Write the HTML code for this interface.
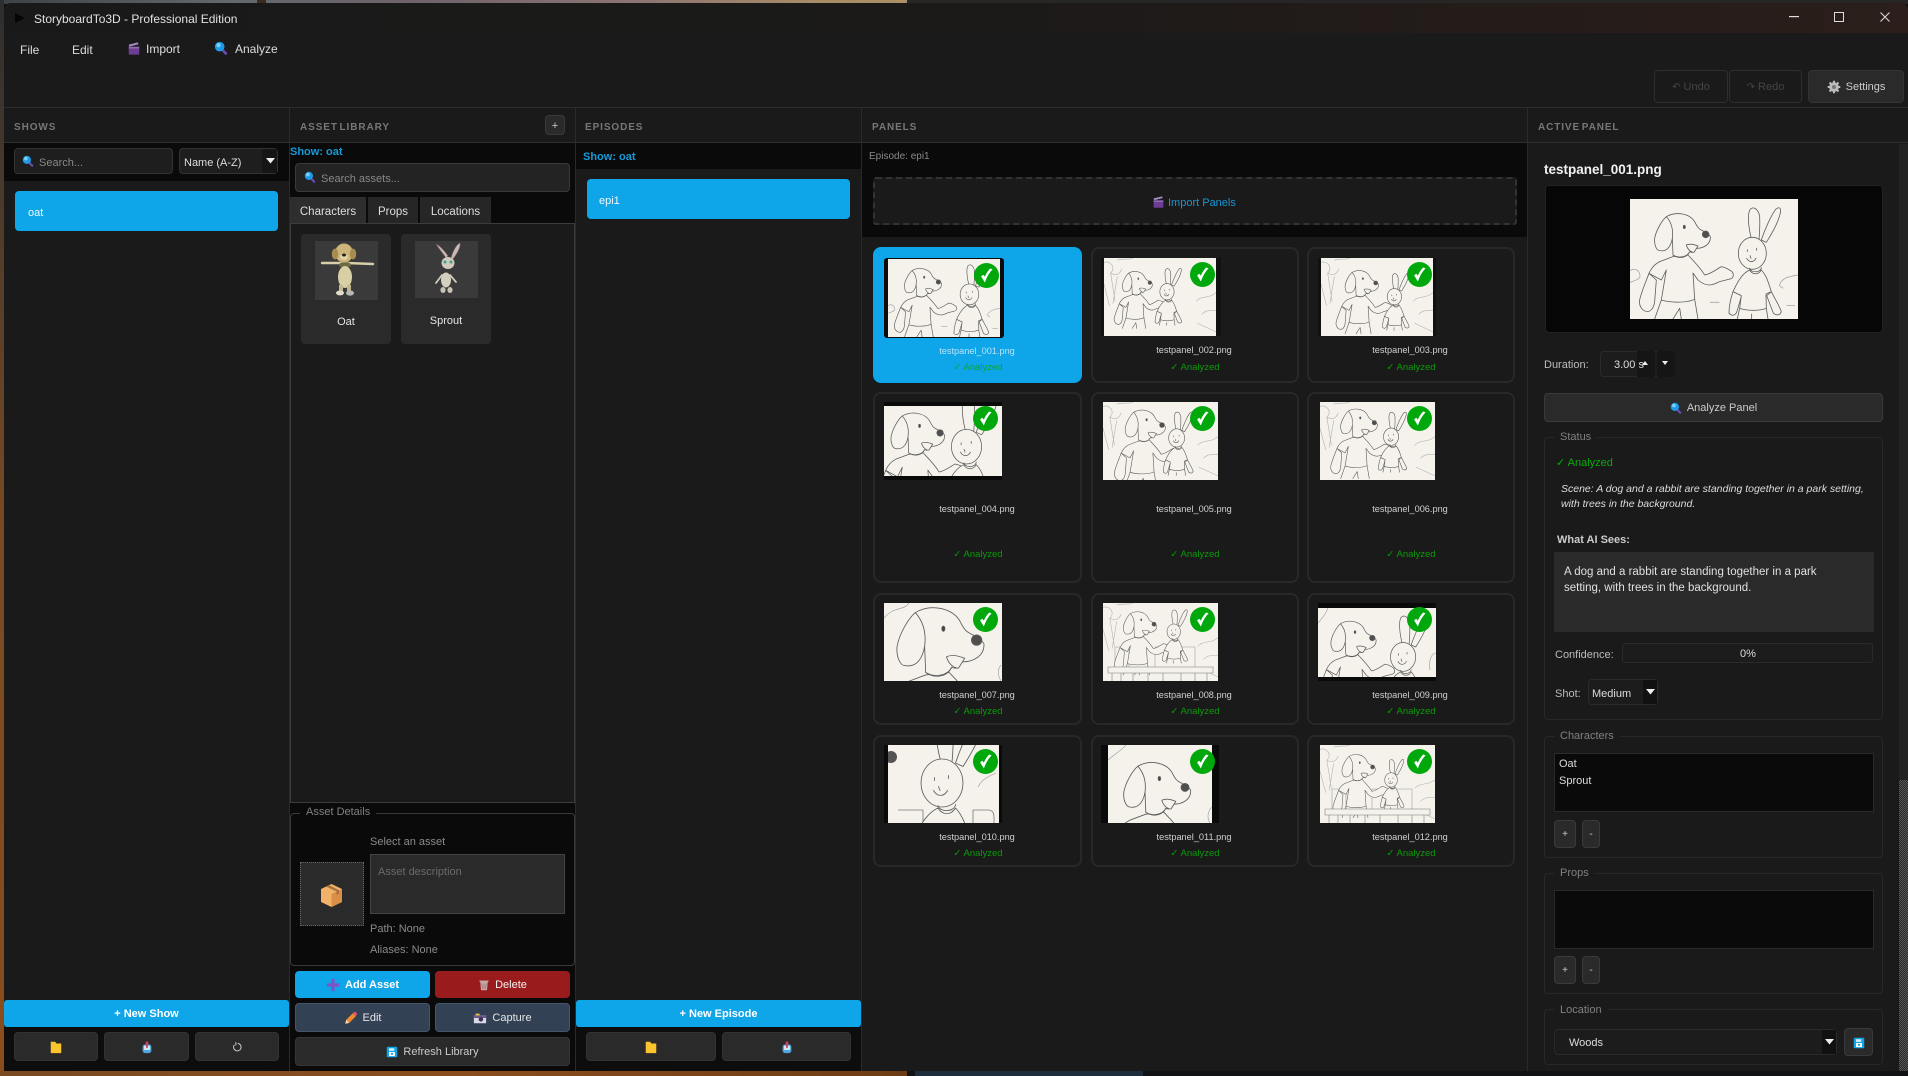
<!DOCTYPE html>
<html><head><meta charset="utf-8"><title>StoryboardTo3D - Professional Edition</title>
<style>
html,body{margin:0;padding:0;width:1908px;height:1076px;overflow:hidden;background:#111;font-family:"Liberation Sans","DejaVu Sans",sans-serif;color:#ccc}
.a{position:absolute;box-sizing:border-box}
.t{position:absolute;white-space:nowrap;line-height:16px;height:16px;font-size:11px;margin-top:1px}
.c{text-align:center}
.hd{font-size:10px;font-weight:bold;color:#777;letter-spacing:.9px;word-spacing:-2px}
.btn{position:absolute;box-sizing:border-box;border:1px solid #3a3a3a;border-radius:4px;background:#2a2a2a;color:#ccc;font-size:11px;display:flex;align-items:center;justify-content:center;white-space:nowrap;padding-top:1px}
.blue{background:#0ea5e9;border:0;color:#fff;font-weight:bold}
.slate{background:#334155;border-color:#475569;color:#e5e5e5}
.ic{width:14px;height:14px;margin-right:4px;flex:none}
.card{position:absolute;box-sizing:border-box;border:2px solid #282828;border-radius:8px;background:#1a1a1a}
.sel{background:#0ea5e9;border-color:#0ea5e9}
.blk{position:absolute;background:#0a0a0a}
.pic{position:absolute;background:#f5f2ec;display:block}
.nm{position:absolute;white-space:nowrap;font-size:9.2px;line-height:14px;color:#d0d0d0;text-align:center;width:120px;margin-top:1px}
.an{position:absolute;white-space:nowrap;font-size:9.5px;line-height:14px;color:#0a9a0a;text-align:center;width:120px;margin-top:1px}
.bdg{position:absolute;width:25px;height:25px;display:block}
.grp{position:absolute;box-sizing:border-box;border:1px solid #282828;border-radius:4px}
.gt{position:absolute;font-size:11px;line-height:14px;color:#808080;background:#1a1a1a;padding:0 6px;white-space:nowrap;margin-top:1px}
.ln *{vector-effect:non-scaling-stroke}
.inp{position:absolute;box-sizing:border-box;background:#1e1e1e;border:1px solid #333;border-radius:4px}
</style></head>
<body>
<svg width="0" height="0" style="position:absolute">
<defs>
<g id="dog" class="ln" fill="#f5f2ec" stroke="#5c5c5c" stroke-linejoin="round" stroke-linecap="round">
<path d="M94 303L74 360M194 301L204 360M149 328L129 360M149 328L154 360"/>
<path d="M57 223C45 255 32 285 29 303C26 322 38 338 54 338C66 335 72 322 74 308L79 243Z"/>
<path d="M174 168C190 185 210 205 224 228C240 226 258 212 274 203C285 205 300 212 308 220C312 230 310 238 300 240L269 248C255 255 245 258 239 258C225 258 212 250 204 243L189 222L194 301C170 312 125 312 94 303L109 213L94 243L57 223C65 205 75 195 89 188L129 173Z"/>
<path d="M129 168C145 180 170 178 179 158" fill="none"/>
<path d="M127 118L129 168C145 178 170 176 179 158C186 162 194 160 199 148C222 148 243 135 241 113C238 106 228 100 214 93C208 90 204 88 194 68C180 45 140 35 109 53C95 65 78 95 74 118C72 138 80 155 89 155C115 160 124 135 127 118Z"/>
<path d="M127 118C130 95 126 72 109 53" fill="none"/>
<path d="M169 138C180 133 192 136 204 141L192 160C182 160 172 150 169 138Z"/>
<circle cx="227" cy="106" r="10" fill="#4f4f4f"/>
<ellipse cx="163" cy="84" rx="3" ry="5" fill="#444"/>
</g>
<g id="rab" class="ln" fill="#f5f2ec" stroke="#5c5c5c" stroke-linejoin="round" stroke-linecap="round">
<path d="M364 118C355 85 352 45 360 32C370 20 385 30 389 52C390 75 389 100 387 122Z"/>
<path d="M394 123C405 90 425 45 439 29C450 22 454 30 451 42C445 70 425 105 409 130Z"/>
<path d="M329 328L322 360M409 328L414 360M365 345L365 360"/>
<path d="M309 278C300 305 297 325 297 343C305 352 315 350 320 340L335 290Z"/>
<path d="M424 278C435 300 448 320 454 338C450 350 438 350 430 342L410 290Z"/>
<path d="M359 213C340 222 326 240 309 278L334 290L329 328C355 336 385 336 409 328L408 285L424 278C415 250 410 230 394 213C385 228 368 228 359 213Z"/>
<ellipse cx="367" cy="163" rx="42" ry="48"/>
<path d="M352 152l0 6M380 148l0 6"/>
<path d="M350 178C358 192 372 190 378 178M360 170l3 8" fill="none"/>
<path d="M359 208C362 222 392 222 394 206" fill="none"/>
</g>
<g id="bg1" class="ln" fill="none" stroke="#a5a5a5">
<path d="M0 215C15 205 30 215 30 232M0 250C15 245 30 240 30 232"/>
<path d="M448 260C455 235 480 232 504 228M448 260L460 268M470 320H495M240 310H268"/>
</g>
<g id="tree" class="ln" fill="none" stroke="#b0b0b0">
<path d="M0 20C30 10 55 45 30 70C50 80 70 80 80 50M60 10C85 0 120 10 130 0"/>
<path d="M30 70L50 200M60 85L40 210M0 120L25 220M415 200C440 170 470 190 504 160M420 300L504 340M440 260C470 230 480 250 504 240"/>
</g>
<g id="bb" class="ln" fill="none" stroke="#999"><path d="M12 64V44H26V64M52 64V44H92V64"/></g>
<g id="bench" class="ln" fill="#f5f2ec" stroke="#777">
<rect x="5" y="64" width="105" height="6"/>
<path d="M9 70V78M18 70V78M30 70V78M45 70V78M60 70V78M78 70V78M92 70V78M104 70V78" fill="none"/>
</g>
<g id="check"><circle cx="12.5" cy="12.5" r="12.5" fill="#00a80c"/><path d="M7.5 13.5L10.8 18.8C12.5 14 15 9.5 18 6.5L16.3 5.8C13.8 8.4 12 11.4 10.9 14.2L9.2 12.2Z" fill="#fff" stroke="#fff" stroke-width=".6"/></g>
<symbol id="mag" viewBox="0 0 16 16"><path d="M9.5 10l4 4.2" stroke="#6b4bb0" stroke-width="3" stroke-linecap="round"/><circle cx="6.5" cy="6.5" r="5.5" fill="#1e9be8"/><circle cx="5.2" cy="4.8" r="2.4" fill="#7fd0f8"/></symbol>
<symbol id="clap" viewBox="0 0 16 16"><rect x="2" y="6" width="12" height="9" rx="1" fill="#6d3d94"/><path d="M2 3.5L12.5 1l.6 2.2L2.5 5.8Z" fill="#a88bc4"/><rect x="2" y="6" width="12" height="2" fill="#8d6ab0"/></symbol>
<symbol id="folder" viewBox="0 0 16 16"><path d="M2 2h5l1.5 2H14v11H2Z" fill="#fbc52d"/></symbol>
<symbol id="upl" viewBox="0 0 16 16"><rect x="3" y="5" width="10" height="10" rx="3" fill="#4aa6dc"/><rect x="4.5" y="6.5" width="7" height="5" fill="#cfe6f4"/><path d="M8 1L5.5 4h5Z M7 4h2v5H7Z" fill="#d8385a"/></symbol>
<symbol id="rfr" viewBox="0 0 16 16"><path d="M9 3.2A5 5 0 1 1 4.6 5" fill="none" stroke="#ccc" stroke-width="1.3"/><path d="M6.5 1.5v4.5" stroke="#ccc" stroke-width="1.3"/></symbol>
<symbol id="save" viewBox="0 0 16 16"><rect x="1" y="1" width="14" height="14" rx="1.5" fill="#0ea5e9"/><rect x="4" y="3" width="7" height="3.5" fill="#d9eefb"/><rect x="4" y="8" width="8" height="5.5" fill="#fff"/><circle cx="8" cy="10.5" r="1.5" fill="#0ea5e9"/></symbol>
<symbol id="pen" viewBox="0 0 16 16"><path d="M1.5 14.5l1-4.5L10 2.5l3.5 3.5L6 13.5Z" fill="#f08a2e"/><path d="M10 2.5l1.6-1.4c.6-.4 1.2-.4 1.7 0l1.3 1.4c.4.5.3 1.1 0 1.5L13.5 6Z" fill="#e2527a"/><path d="M1.5 14.5l1-4.5 3.5 3.5Z" fill="#f6d9b0"/></symbol>
<symbol id="cam" viewBox="0 0 16 16"><rect x="1" y="5" width="14" height="9" fill="#ddd8e8"/><rect x="1" y="5" width="14" height="3" fill="#6a5a8c"/><path d="M3 5V3h4l1 2Z" fill="#f2c84a"/><circle cx="9" cy="9.5" r="2.6" fill="#3b3350"/></symbol>
<symbol id="plus" viewBox="0 0 16 16"><path d="M6.2 1h3.6v5.2H15v3.6H9.8V15H6.2V9.8H1V6.2h5.2Z" fill="#7a55c7"/></symbol>
<symbol id="trash" viewBox="0 0 16 16"><path d="M2 2h12v2H2ZM3 4h10l-1 11H4Z" fill="#c9a6a6"/><path d="M5 6l1 7M8 6v7M11 6l-1 7" stroke="#8d6a6a" stroke-width=".8"/></symbol>
<symbol id="gear" viewBox="0 0 16 16"><circle cx="8" cy="8" r="5.5" fill="#bbb"/><path d="M8 0.8V15.2M0.8 8H15.2M2.9 2.9L13.1 13.1M13.1 2.9L2.9 13.1" stroke="#bbb" stroke-width="2.4"/><circle cx="8" cy="8" r="2.3" fill="#777"/></symbol>
</defs>
</svg>

<!-- wallpaper -->
<div class="a" style="left:0;top:0;width:907px;height:4px;background:linear-gradient(90deg,#3c4246 0,#62696e 25%,#6e626a 45%,#8c7474 70%,#a88c66 90%,#ab9064 100%)"></div>
<div class="a" style="left:257px;top:0;width:9px;height:4px;background:#3a2a20"></div>
<div class="a" style="left:907px;top:0;width:1001px;height:4px;background:#262626"></div>
<div class="a" style="left:0;top:0;width:4px;height:1076px;background:linear-gradient(180deg,#2e2e2e 0,#4a3a2c 18%,#7a4a22 50%,#8a4c1c 100%)"></div>
<div class="a" style="left:0;top:1071px;width:907px;height:5px;background:linear-gradient(90deg,#7a4a22,#8a4e1e 50%,#6e3c14)"></div>
<div class="a" style="left:907px;top:1071px;width:1001px;height:5px;background:#101214"></div>
<div class="a" style="left:915px;top:1071px;width:228px;height:5px;background:#1e2d3c"></div>

<!-- window -->
<div class="a" style="left:4px;top:3px;width:1904px;height:1068px;background:#1a1a1a;border-radius:7px 7px 0 0;overflow:hidden"></div>
<div class="a" style="left:4px;top:3px;width:1904px;height:30px;border-radius:7px 7px 0 0;background:linear-gradient(90deg,#191919 0,#1b1a19 50%,#261c19 85%,#2b1e1b 100%)"></div>
<svg class="a" style="left:15px;top:13px" width="10" height="10"><path d="M0 0L10 5L0 10Z" fill="#050505"/></svg>
<div class="t" style="left:34px;top:10px;font-size:12px;color:#e2e2e2">StoryboardTo3D - Professional Edition</div>
<svg class="a" style="left:1789px;top:16px" width="10" height="2"><rect width="10" height="1.2" fill="#ddd"/></svg>
<svg class="a" style="left:1834px;top:12px" width="10" height="10"><rect x=".5" y=".5" width="9" height="9" fill="none" stroke="#ddd"/></svg>
<svg class="a" style="left:1880px;top:12px" width="10" height="10"><path d="M.5.5l9 9M9.5.5l-9 9" stroke="#ddd"/></svg>

<div class="t" style="left:20px;top:41px;font-size:12px;color:#ddd">File</div>
<div class="t" style="left:72px;top:41px;font-size:12px;color:#ddd">Edit</div>
<svg class="a" style="left:127px;top:41px" width="14" height="15"><use href="#clap"/></svg>
<div class="t" style="left:146px;top:40px;font-size:12px;color:#ddd">Import</div>
<svg class="a" style="left:214px;top:41px" width="14" height="14"><use href="#mag"/></svg>
<div class="t" style="left:235px;top:40px;font-size:12px;color:#ddd">Analyze</div>

<div class="btn" style="left:1654px;top:70px;width:74px;height:33px;background:#1a1a1a;border-color:#2e2e2e;color:#454545;border-radius:4px"><span style="font-size:10px;margin-right:3px">↶</span>Undo</div>
<div class="btn" style="left:1729px;top:70px;width:73px;height:33px;background:#1a1a1a;border-color:#2e2e2e;color:#454545"><span style="font-size:10px;margin-right:3px">↷</span>Redo</div>
<div class="btn" style="left:1808px;top:70px;width:96px;height:33px;border-color:#333;color:#ccc"><svg class="ic" style="margin-right:5px"><use href="#gear"/></svg>Settings</div>

<!-- lines -->
<div class="a" style="left:4px;top:107px;width:1904px;height:1px;background:#2c2c2c"></div>
<div class="a" style="left:4px;top:142px;width:1904px;height:1px;background:#2e2e2e"></div>
<div class="a" style="left:289px;top:108px;width:1px;height:963px;background:#2a2a2a"></div>
<div class="a" style="left:575px;top:108px;width:1px;height:963px;background:#2a2a2a"></div>
<div class="a" style="left:861px;top:108px;width:1px;height:963px;background:#2a2a2a"></div>
<div class="a" style="left:1527px;top:108px;width:1px;height:963px;background:#2a2a2a"></div>

<div class="t hd" style="left:14px;top:119px">SHOWS</div>
<div class="t hd" style="left:300px;top:119px">ASSET LIBRARY</div>
<div class="t hd" style="left:585px;top:119px">EPISODES</div>
<div class="t hd" style="left:872px;top:119px">PANELS</div>
<div class="t hd" style="left:1538px;top:119px">ACTIVE PANEL</div>
<div class="btn" style="left:545px;top:115px;width:20px;height:20px;font-size:11px">+</div>

<!-- SHOWS -->
<div class="a" style="left:4px;top:143px;width:285px;height:38px;background:#0a0a0a"></div>
<div class="a" style="left:4px;top:1027px;width:285px;height:44px;background:#0d0d0d"></div>
<div class="inp" style="left:14px;top:148px;width:159px;height:26px"></div>
<svg class="a" style="left:22px;top:155px" width="12" height="12"><use href="#mag"/></svg>
<div class="t" style="left:39px;top:154px;font-size:11px;color:#888">Search...</div>
<div class="inp" style="left:179px;top:148px;width:99px;height:26px"></div>
<div class="t" style="left:184px;top:154px;font-size:11px;color:#ddd">Name (A-Z)</div>
<div class="a" style="left:262px;top:149px;width:15px;height:24px;background:#151515"></div>
<svg class="a" style="left:266px;top:158px" width="9" height="6"><path d="M0 0h9L4.5 5.5Z" fill="#eee"/></svg>
<div class="a" style="left:15px;top:191px;width:263px;height:40px;background:#0ea5e9;border-radius:4px"></div>
<div class="t" style="left:28px;top:204px;font-size:11px;color:#f0f8ff">oat</div>
<div class="btn blue" style="left:4px;top:1000px;width:285px;height:27px;border-radius:3px">+ New Show</div>
<div class="btn" style="left:14px;top:1032px;width:84px;height:29px;border-color:#333"><svg width="14" height="14"><use href="#folder"/></svg></div>
<div class="btn" style="left:104px;top:1032px;width:85px;height:29px;border-color:#333"><svg width="14" height="14"><use href="#upl"/></svg></div>
<div class="btn" style="left:195px;top:1032px;width:84px;height:29px;border-color:#333"><svg width="12" height="12"><use href="#rfr"/></svg></div>

<!-- ASSET LIBRARY -->
<div class="a" style="left:290px;top:143px;width:285px;height:928px;background:#0a0a0a"></div>
<div class="t" style="left:290px;top:143px;font-size:11px;font-weight:bold;color:#169bd8">Show: oat</div>
<div class="inp" style="left:295px;top:163px;width:275px;height:29px;background:#232323;border-color:#3a3a3a"></div>
<svg class="a" style="left:304px;top:171px" width="12" height="12"><use href="#mag"/></svg>
<div class="t" style="left:321px;top:170px;font-size:11px;color:#888">Search assets...</div>
<div class="a" style="left:290px;top:197px;width:76px;height:26px;background:#2e2e2e"></div>
<div class="a" style="left:368px;top:197px;width:50px;height:26px;background:#262626"></div>
<div class="a" style="left:420px;top:197px;width:71px;height:26px;background:#262626"></div>
<div class="t c" style="left:290px;top:203px;width:76px;font-size:11.5px;color:#ddd">Characters</div>
<div class="t c" style="left:368px;top:203px;width:50px;font-size:11.5px;color:#ddd">Props</div>
<div class="t c" style="left:420px;top:203px;width:71px;font-size:11.5px;color:#ddd">Locations</div>
<div class="a" style="left:290px;top:223px;width:285px;height:580px;background:#1a1a1a;border:1px solid #3c3c3c"></div>
<div class="a" style="left:301px;top:234px;width:90px;height:110px;background:#2a2a2a;border-radius:4px"></div>
<div class="a" style="left:401px;top:234px;width:90px;height:110px;background:#2a2a2a;border-radius:4px"></div>
<svg class="a" style="left:315px;top:241px" width="63" height="59" viewBox="0 0 63 59">
<rect width="63" height="59" fill="#3a3a3a"/>
<path d="M7 22L28 22M32 22L58 23" stroke="#d8cfa8" stroke-width="2.4" stroke-linecap="round"/>
<ellipse cx="30" cy="24" rx="6" ry="3" fill="#6b6b45"/>
<ellipse cx="30" cy="36" rx="7" ry="11" fill="#d9cfa5"/>
<rect x="24" y="44" width="4" height="7" fill="#c4b98e"/><rect x="32" y="44" width="4" height="7" fill="#c4b98e"/>
<ellipse cx="25" cy="52" rx="4" ry="2.4" fill="#e0dcc8"/><ellipse cx="35" cy="52" rx="4" ry="2.6" fill="#b8b8b0"/>
<ellipse cx="29" cy="12" rx="9" ry="9.5" fill="#cdb478"/>
<ellipse cx="20" cy="13" rx="3.2" ry="5.5" fill="#a68c52"/><ellipse cx="38" cy="13" rx="3.2" ry="5.5" fill="#a68c52"/>
<ellipse cx="29" cy="16" rx="4" ry="3" fill="#e2d4a8"/><ellipse cx="29" cy="14" rx="2" ry="1.5" fill="#222"/>
</svg>
<svg class="a" style="left:415px;top:241px" width="63" height="57" viewBox="0 0 63 57">
<rect width="63" height="57" fill="#3a3a3a"/>
<path d="M31 17C26 10 22 5 21 3C24 4 30 10 33 15Z" fill="#c9b8b8" stroke="#6d5a5a" stroke-width=".6"/>
<path d="M36 17C38 9 42 3 45 2C46 6 42 13 38 18Z" fill="#c9b8b8" stroke="#6d5a5a" stroke-width=".6"/>
<ellipse cx="33" cy="22" rx="6.5" ry="6" fill="#cfcabb"/>
<circle cx="30" cy="21" r="1.5" fill="#3aa58f"/><circle cx="36" cy="21" r="1.5" fill="#3aa58f"/>
<ellipse cx="31" cy="39" rx="5" ry="7.5" fill="#d4cfbe"/>
<path d="M27 34L21 42M35 34L41 41" stroke="#cfcabb" stroke-width="1.8" stroke-linecap="round"/>
<ellipse cx="28" cy="49" rx="2.6" ry="3" fill="#c8c3b2"/><ellipse cx="35" cy="49" rx="2.6" ry="3" fill="#c8c3b2"/>
</svg>
<div class="t c" style="left:301px;top:313px;width:90px;font-size:11px;color:#e5e5e5">Oat</div>
<div class="t c" style="left:401px;top:312px;width:90px;font-size:11px;color:#e5e5e5">Sprout</div>

<div class="grp" style="left:290px;top:813px;width:285px;height:153px;border-color:#3a3a3a"></div>
<div class="gt" style="left:300px;top:804px;background:#0a0a0a;color:#808080">Asset Details</div>
<div class="t" style="left:370px;top:833px;font-size:11px;color:#8a8a8a">Select an asset</div>
<div class="a" style="left:370px;top:854px;width:195px;height:60px;background:#2a2a2a;border:1px solid #444"></div>
<div class="t" style="left:378px;top:863px;font-size:11px;color:#6a6a6a">Asset description</div>
<div class="a" style="left:300px;top:862px;width:64px;height:64px;background:#2a2a2a;border:1px dotted #666"></div>
<svg class="a" style="left:321px;top:884px" width="21" height="23" viewBox="0 0 21 23"><path d="M10.5 0L21 5V18L10.5 23L0 18V5Z" fill="#f1b267"/><path d="M10.5 10L21 5V18L10.5 23Z" fill="#d98f46"/><path d="M5 2.5L15.5 7.5V11L18 9.8V6.3L8 1Z" fill="#a9713e"/></svg>
<div class="t" style="left:370px;top:920px;font-size:11px;color:#8a8a8a">Path: None</div>
<div class="t" style="left:370px;top:941px;font-size:11px;color:#8a8a8a">Aliases: None</div>
<div class="btn blue" style="left:295px;top:971px;width:135px;height:27px"><svg class="ic" style="margin-right:5px"><use href="#plus"/></svg>Add Asset</div>
<div class="btn" style="left:435px;top:971px;width:135px;height:27px;background:#991b1b;border:0;color:#f2f2f2"><svg class="ic" style="width:12px;height:12px;margin-right:5px"><use href="#trash"/></svg>Delete</div>
<div class="btn slate" style="left:295px;top:1003px;width:135px;height:29px"><svg class="ic" style="margin-right:5px"><use href="#pen"/></svg>Edit</div>
<div class="btn slate" style="left:435px;top:1003px;width:135px;height:29px"><svg class="ic" style="margin-right:5px"><use href="#cam"/></svg>Capture</div>
<div class="btn" style="left:295px;top:1037px;width:275px;height:29px;border-color:#363636"><svg class="ic" style="width:12px;height:12px;margin-right:5px"><use href="#save"/></svg>Refresh Library</div>

<!-- EPISODES -->
<div class="a" style="left:576px;top:143px;width:285px;height:26px;background:#0a0a0a"></div>
<div class="a" style="left:576px;top:1027px;width:285px;height:44px;background:#0d0d0d"></div>
<div class="t" style="left:583px;top:148px;font-size:11px;font-weight:bold;color:#169bd8">Show: oat</div>
<div class="a" style="left:587px;top:179px;width:263px;height:40px;background:#0ea5e9;border-radius:4px"></div>
<div class="t" style="left:599px;top:192px;font-size:11px;color:#f0f8ff">epi1</div>
<div class="btn blue" style="left:576px;top:1000px;width:285px;height:27px;border-radius:3px">+ New Episode</div>
<div class="btn" style="left:586px;top:1032px;width:130px;height:29px;border-color:#333"><svg width="14" height="14"><use href="#folder"/></svg></div>
<div class="btn" style="left:722px;top:1032px;width:129px;height:29px;border-color:#333"><svg width="14" height="14"><use href="#upl"/></svg></div>

<!-- PANELS -->
<div class="a" style="left:862px;top:143px;width:665px;height:94px;background:#0a0a0a"></div>
<div class="t" style="left:869px;top:148px;font-size:10px;color:#8a8a8a">Episode: epi1</div>
<div class="a" style="left:873px;top:177px;width:644px;height:48px;background:#1a1a1a;border:2px dashed #333;border-radius:3px"></div>
<svg class="a" style="left:1152px;top:195px" width="13" height="14"><use href="#clap"/></svg>
<div class="t" style="left:1168px;top:194px;font-size:11px;color:#1e95cf">Import Panels</div>

<!-- cards -->
<div class="card sel" style="left:873px;top:247px;width:209px;height:136px"></div>
<div class="card" style="left:1091px;top:247px;width:208px;height:136px"></div>
<div class="card" style="left:1307px;top:247px;width:208px;height:136px"></div>
<div class="card" style="left:873px;top:392px;width:209px;height:191px"></div>
<div class="card" style="left:1091px;top:392px;width:208px;height:191px"></div>
<div class="card" style="left:1307px;top:392px;width:208px;height:191px"></div>
<div class="card" style="left:873px;top:593px;width:209px;height:132px"></div>
<div class="card" style="left:1091px;top:593px;width:208px;height:132px"></div>
<div class="card" style="left:1307px;top:593px;width:208px;height:132px"></div>
<div class="card" style="left:873px;top:735px;width:209px;height:132px"></div>
<div class="card" style="left:1091px;top:735px;width:208px;height:132px"></div>
<div class="card" style="left:1307px;top:735px;width:208px;height:132px"></div>

<!-- thumbnails row 1 -->
<div class="blk" style="left:884px;top:258px;width:120px;height:80px;border-radius:3px"></div>
<svg class="pic" style="left:888px;top:259px" width="112" height="78" viewBox="0 0 112 78" stroke-width=".65"><g transform="scale(.222 .217)"><use href="#bg1"/><use href="#dog"/><use href="#rab"/></g></svg>
<div class="blk" style="left:1101px;top:258px;width:120px;height:78px;background:#111"></div>
<svg class="pic" style="left:1104px;top:258px" width="112" height="78" viewBox="0 0 112 78" stroke-width=".6"><g transform="scale(.222 .217)"><use href="#tree"/></g><use href="#dog" transform="translate(5 5.6) scale(.18)"/><use href="#rab" transform="translate(.6 6) scale(.17)"/></svg>
<div class="blk" style="left:1318px;top:258px;width:118px;height:78px;background:#111"></div>
<svg class="pic" style="left:1321px;top:258px" width="112" height="78" viewBox="0 0 112 78" stroke-width=".6"><g transform="scale(.222 .217)"><use href="#tree"/></g><use href="#dog" transform="translate(9.3 3.8) scale(.2)"/><use href="#rab" transform="translate(11 11) scale(.17)"/></svg>
<!-- row 2 -->
<div class="blk" style="left:884px;top:402px;width:118px;height:78px"></div>
<svg class="pic" style="left:884px;top:406px" width="118" height="70" viewBox="0 0 118 70" stroke-width=".75"><use href="#dog" transform="translate(-16.6 -7) scale(.32)"/><use href="#rab" transform="translate(-49.6 -18) scale(.36)"/></svg>
<svg class="pic" style="left:1103px;top:402px" width="115" height="78" viewBox="0 0 115 78" stroke-width=".6"><g transform="scale(.228 .217)"><use href="#tree"/></g><use href="#dog" transform="translate(4.5 -2.4) scale(.24)"/><use href="#rab" transform="translate(3.9 5) scale(.19)"/></svg>
<svg class="pic" style="left:1320px;top:402px" width="115" height="78" viewBox="0 0 115 78" stroke-width=".6"><g transform="scale(.228 .217)"><use href="#tree"/></g><use href="#dog" transform="translate(4.4 -2.6) scale(.22)"/><use href="#rab" transform="translate(5 5.4) scale(.18)"/></svg>
<!-- row 3 -->
<svg class="pic" style="left:884px;top:603px" width="118" height="78" viewBox="0 0 118 78" stroke-width=".85"><path d="M0 15C10 3 20 8 25 0M117 62C112 68 115 75 117 78" fill="none" stroke="#999" stroke-width=".6"/><use href="#dog" transform="translate(-25.4 -18) scale(.52)"/></svg>
<svg class="pic" style="left:1103px;top:603px" width="115" height="78" viewBox="0 0 115 78" stroke-width=".55"><g transform="scale(.228 .217)"><use href="#tree"/></g><use href="#bb"/><use href="#dog" transform="translate(5.6 0) scale(.2)"/><use href="#rab" transform="translate(12 2.6) scale(.16)"/><use href="#bench"/></svg>
<div class="blk" style="left:1318px;top:603px;width:118px;height:78px"></div>
<svg class="pic" style="left:1318px;top:608px" width="118" height="69" viewBox="0 0 118 69" stroke-width=".7"><path d="M0 15C6 8 8 5 10 0M112 62C110 50 115 45 118 45" fill="none" stroke="#999" stroke-width=".6"/><use href="#dog" transform="translate(-7 1.4) scale(.27)"/><use href="#rab" transform="translate(-25 0) scale(.3)"/></svg>
<!-- row 4 -->
<div class="blk" style="left:884px;top:745px;width:118px;height:78px"></div>
<svg class="pic" style="left:888px;top:745px" width="111" height="78" viewBox="0 0 111 78" stroke-width=".85"><path d="M10 65H35V78M85 78V65H100Q106 65 106 72V78" fill="none" stroke="#777" stroke-width=".8"/><ellipse cx="3" cy="12" rx="6" ry="6" fill="#555"/><path d="M90 42C95 32 105 30 108 28" fill="none" stroke="#999" stroke-width=".6"/><use href="#rab" transform="translate(-129.5 -43.5) scale(.5)"/></svg>
<div class="blk" style="left:1101px;top:745px;width:118px;height:78px"></div>
<svg class="pic" style="left:1108px;top:745px" width="104" height="78" viewBox="0 0 104 78" stroke-width=".85"><path d="M0 15C8 8 14 5 18 0M104 62C98 68 100 75 102 78" fill="none" stroke="#999" stroke-width=".6"/><use href="#dog" transform="translate(-13.8 0) scale(.4)"/></svg>
<svg class="pic" style="left:1320px;top:745px" width="115" height="78" viewBox="0 0 115 78" stroke-width=".55"><g transform="scale(.228 .217)"><use href="#tree"/></g><use href="#bb"/><use href="#dog" transform="translate(7.2 .8) scale(.2)"/><use href="#rab" transform="translate(16 10.5) scale(.15)"/><use href="#bench"/></svg>

<!-- badges -->
<svg class="bdg" style="left:973.5px;top:262.5px"><use href="#check"/></svg>
<svg class="bdg" style="left:1190px;top:261.5px"><use href="#check"/></svg>
<svg class="bdg" style="left:1406.5px;top:261.5px"><use href="#check"/></svg>
<svg class="bdg" style="left:973px;top:405.5px"><use href="#check"/></svg>
<svg class="bdg" style="left:1190px;top:405.5px"><use href="#check"/></svg>
<svg class="bdg" style="left:1406.5px;top:405.5px"><use href="#check"/></svg>
<svg class="bdg" style="left:973px;top:606.5px"><use href="#check"/></svg>
<svg class="bdg" style="left:1190px;top:606.5px"><use href="#check"/></svg>
<svg class="bdg" style="left:1406.5px;top:606.5px"><use href="#check"/></svg>
<svg class="bdg" style="left:973px;top:748.5px"><use href="#check"/></svg>
<svg class="bdg" style="left:1190px;top:748.5px"><use href="#check"/></svg>
<svg class="bdg" style="left:1406.5px;top:748.5px"><use href="#check"/></svg>

<!-- labels -->
<div class="nm" style="left:917px;top:343px;color:#b9e2f8">testpanel_001.png</div><div class="an" style="left:918px;top:360px;color:#07a832">✓ Analyzed</div>
<div class="nm" style="left:1134px;top:342px">testpanel_002.png</div><div class="an" style="left:1135px;top:360px">✓ Analyzed</div>
<div class="nm" style="left:1350px;top:342px">testpanel_003.png</div><div class="an" style="left:1351px;top:360px">✓ Analyzed</div>
<div class="nm" style="left:917px;top:501px">testpanel_004.png</div><div class="an" style="left:918px;top:547px">✓ Analyzed</div>
<div class="nm" style="left:1134px;top:501px">testpanel_005.png</div><div class="an" style="left:1135px;top:547px">✓ Analyzed</div>
<div class="nm" style="left:1350px;top:501px">testpanel_006.png</div><div class="an" style="left:1351px;top:547px">✓ Analyzed</div>
<div class="nm" style="left:917px;top:687px">testpanel_007.png</div><div class="an" style="left:918px;top:704px">✓ Analyzed</div>
<div class="nm" style="left:1134px;top:687px">testpanel_008.png</div><div class="an" style="left:1135px;top:704px">✓ Analyzed</div>
<div class="nm" style="left:1350px;top:687px">testpanel_009.png</div><div class="an" style="left:1351px;top:704px">✓ Analyzed</div>
<div class="nm" style="left:917px;top:829px">testpanel_010.png</div><div class="an" style="left:918px;top:846px">✓ Analyzed</div>
<div class="nm" style="left:1134px;top:829px">testpanel_011.png</div><div class="an" style="left:1135px;top:846px">✓ Analyzed</div>
<div class="nm" style="left:1350px;top:829px">testpanel_012.png</div><div class="an" style="left:1351px;top:846px">✓ Analyzed</div>

<!-- ACTIVE PANEL -->
<div class="t" style="left:1544px;top:161px;font-size:13.5px;font-weight:bold;color:#f2f2f2">testpanel_001.png</div>
<div class="a" style="left:1545px;top:185px;width:338px;height:148px;background:#060606;border:1px solid #222;border-radius:4px"></div>
<svg class="pic" style="left:1630px;top:199px" width="168" height="120" viewBox="0 0 168 120" stroke-width=".8"><g transform="scale(.3333)"><use href="#bg1"/><use href="#dog"/><use href="#rab"/></g></svg>
<div class="t" style="left:1544px;top:356px;font-size:11px;color:#bbb">Duration:</div>
<div class="inp" style="left:1600px;top:351px;width:75px;height:26px;background:#1c1c1c;border-color:#2a2a2a"></div>
<div class="a" style="left:1637px;top:351px;width:18px;height:26px;background:#151515"></div>
<div class="a" style="left:1657px;top:351px;width:18px;height:26px;background:#151515"></div>
<div class="t" style="left:1614px;top:356px;font-size:11px;color:#ddd">3.00 s</div>
<svg class="a" style="left:1642px;top:361px" width="6" height="4"><path d="M0 4L3 0L6 4Z" fill="#eee"/></svg>
<svg class="a" style="left:1662px;top:361px" width="6" height="4"><path d="M0 0L3 4L6 0Z" fill="#eee"/></svg>
<div class="btn" style="left:1544px;top:393px;width:339px;height:29px;border-color:#3a3a3a"><svg class="ic" style="width:12px;height:12px;margin-right:5px"><use href="#mag"/></svg>Analyze Panel</div>

<div class="grp" style="left:1544px;top:437px;width:339px;height:283px"></div>
<div class="gt" style="left:1554px;top:429px">Status</div>
<div class="t" style="left:1556px;top:454px;font-size:11px;color:#0ea80e">✓ Analyzed</div>
<div class="t" style="left:1561px;top:480px;font-size:10.5px;font-style:italic;color:#ddd">Scene: A dog and a rabbit are standing together in a park setting,</div>
<div class="t" style="left:1561px;top:495px;font-size:10.5px;font-style:italic;color:#ddd">with trees in the background.</div>
<div class="t" style="left:1557px;top:531px;font-size:11px;font-weight:bold;color:#ccc">What AI Sees:</div>
<div class="a" style="left:1554px;top:552px;width:320px;height:80px;background:#2a2a2a"></div>
<div class="t" style="left:1564px;top:563px;font-size:11.5px;color:#e0e0e0">A dog and a rabbit are standing together in a park</div>
<div class="t" style="left:1564px;top:579px;font-size:11.5px;color:#e0e0e0">setting, with trees in the background.</div>
<div class="t" style="left:1555px;top:646px;font-size:11px;color:#bbb">Confidence:</div>
<div class="a" style="left:1622px;top:643px;width:251px;height:20px;background:#1c1c1c;border:1px solid #2a2a2a;border-radius:3px"></div>
<div class="t c" style="left:1622px;top:645px;width:252px;font-size:11px;color:#ddd">0%</div>
<div class="t" style="left:1555px;top:685px;font-size:11px;color:#bbb">Shot:</div>
<div class="inp" style="left:1588px;top:679px;width:70px;height:26px;background:#1c1c1c;border-color:#2a2a2a"></div>
<div class="a" style="left:1643px;top:680px;width:14px;height:24px;background:#111"></div>
<div class="t" style="left:1592px;top:685px;font-size:11px;color:#ddd">Medium</div>
<svg class="a" style="left:1646px;top:689px" width="9" height="6"><path d="M0 0h9L4.5 5.5Z" fill="#eee"/></svg>

<div class="grp" style="left:1544px;top:736px;width:339px;height:122px"></div>
<div class="gt" style="left:1554px;top:728px">Characters</div>
<div class="a" style="left:1554px;top:753px;width:320px;height:59px;background:#0a0a0a;border:1px solid #2a2a2a"></div>
<div class="t" style="left:1559px;top:755px;font-size:11px;color:#ddd">Oat</div>
<div class="t" style="left:1559px;top:772px;font-size:11px;color:#ddd">Sprout</div>
<div class="btn" style="left:1554px;top:820px;width:22px;height:28px;border-color:#3a3a3a;font-size:10px">+</div>
<div class="btn" style="left:1582px;top:820px;width:18px;height:28px;border-color:#3a3a3a;font-size:10px">-</div>

<div class="grp" style="left:1544px;top:873px;width:339px;height:121px"></div>
<div class="gt" style="left:1554px;top:865px">Props</div>
<div class="a" style="left:1554px;top:890px;width:320px;height:59px;background:#0a0a0a;border:1px solid #2a2a2a"></div>
<div class="btn" style="left:1554px;top:956px;width:22px;height:28px;border-color:#3a3a3a;font-size:10px">+</div>
<div class="btn" style="left:1582px;top:956px;width:18px;height:28px;border-color:#3a3a3a;font-size:10px">-</div>

<div class="grp" style="left:1544px;top:1009px;width:339px;height:56px"></div>
<div class="gt" style="left:1554px;top:1002px">Location</div>
<div class="inp" style="left:1554px;top:1029px;width:283px;height:26px;background:#1c1c1c;border-color:#2a2a2a"></div>
<div class="a" style="left:1822px;top:1030px;width:14px;height:24px;background:#111"></div>
<div class="t" style="left:1569px;top:1034px;font-size:11px;color:#ddd">Woods</div>
<svg class="a" style="left:1825px;top:1039px" width="9" height="6"><path d="M0 0h9L4.5 5.5Z" fill="#eee"/></svg>
<div class="btn" style="left:1844px;top:1028px;width:29px;height:28px;border-color:#3a3a3a"><svg width="12" height="12"><use href="#save"/></svg></div>

<!-- scrollbar -->
<div class="a" style="left:1899px;top:144px;width:9px;height:927px;background:#222"></div>
<div class="a" style="left:1899px;top:780px;width:9px;height:291px;background:repeating-conic-gradient(#555 0 25%,#2a2a2a 0 50%) 0 0/2px 2px"></div>
</body></html>
